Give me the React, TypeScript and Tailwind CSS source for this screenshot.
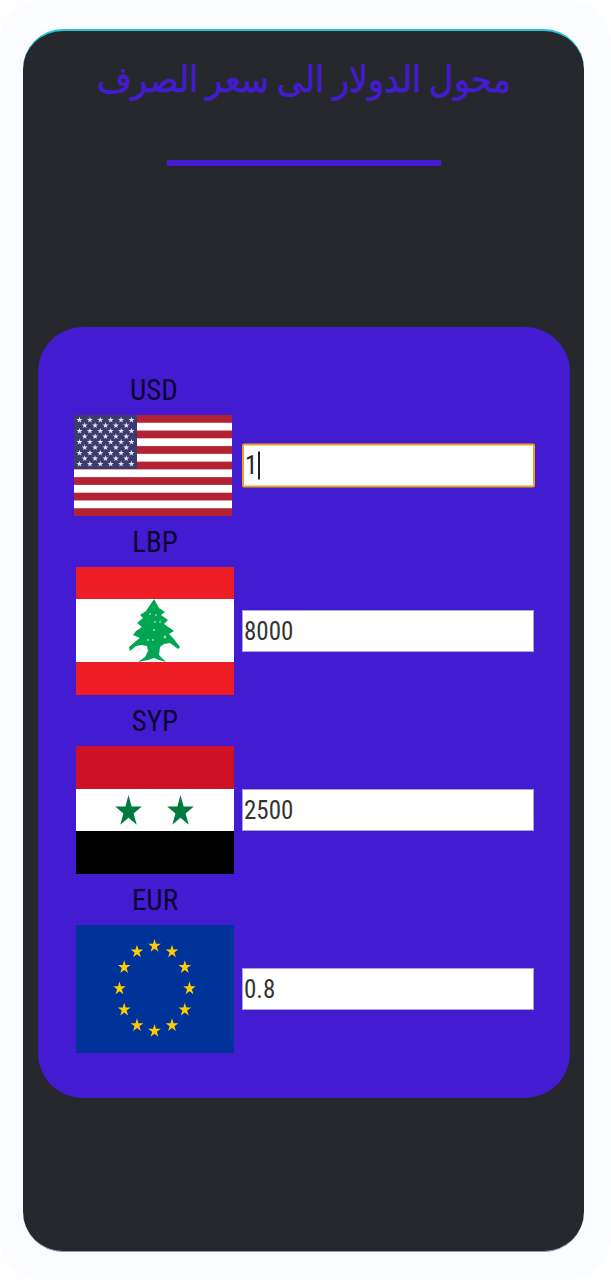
import type { ReactNode } from 'react'

const starPoints = (cx: number, cy: number, rx: number, ry: number) => {
  const pts: string[] = []
  for (let i = 0; i < 10; i++) {
    const a = (Math.PI / 5) * i - Math.PI / 2
    const k = i % 2 === 0 ? 1 : 0.382
    pts.push(`${(cx + Math.cos(a) * rx * k).toFixed(2)},${(cy + Math.sin(a) * ry * k).toFixed(2)}`)
  }
  return pts.join(' ')
}

const UsFlag = () => {
  const stripe = 101 / 13
  const stars: ReactNode[] = []
  for (let row = 0; row < 9; row++) {
    const count = row % 2 === 0 ? 6 : 5
    for (let col = 0; col < count; col++) {
      const x = (row % 2 === 0 ? 5.5 : 10.7) + col * 10.4
      const y = 5 + row * 5.5
      stars.push(<polygon key={`${row}-${col}`} points={starPoints(x, y, 3.2, 3.2)} fill='#e4e5ee' />)
    }
  }
  return (
    <svg viewBox='0 0 158 101' className='block w-[158px] h-[101px]'>
      <rect width='158' height='101' fill='#fff' />
      {Array.from({ length: 7 }, (_, i) => (
        <rect key={i} y={i * 2 * stripe} width='158' height={stripe} fill='#b22234' />
      ))}
      <rect width='63' height='54' fill='#3c3b6e' />
      {stars}
    </svg>
  )
}

const LbFlag = () => (
  <svg viewBox='0 0 158 128' className='block w-[158px] h-[128px]'>
    <rect width='158' height='128' fill='#ee1c25' />
    <rect y='32' width='158' height='63' fill='#fff' />
    <path
      fill='#00a651'
      d='M78 32 L83 41 L89 45 L85 48 L92 53 L88 57 L98 64 L93 67 L97 71 L104 80 L102 82 L94 76 L88 77 L84 80 L83 88 L90 95 L83 93 L78 91 L72 93 L62 95 L69 90 L72 84 L71 79 L65 78 L60 79 L54 84 L53 80 L60 74 L64 71 L57 68 L60 64 L66 60 L61 56 L67 51 L64 48 L70 44 Z'
    />
    <g fill='#fff' opacity='0.6'>
      <circle cx='74' cy='47' r='0.9' />
      <circle cx='80' cy='48' r='0.9' />
      <circle cx='79' cy='55' r='1' />
      <circle cx='84' cy='55' r='0.9' />
      <circle cx='78' cy='63' r='1.1' />
      <circle cx='72' cy='73' r='1' />
      <circle cx='77' cy='73' r='1' />
      <circle cx='89' cy='70' r='1.4' />
    </g>
  </svg>
)

const SyFlag = () => (
  <svg viewBox='0 0 158 128' className='block w-[158px] h-[128px]'>
    <rect width='158' height='43' fill='#ce1126' />
    <rect y='43' width='158' height='42' fill='#fff' />
    <rect y='85' width='158' height='43' fill='#000' />
    <polygon points={starPoints(52.5, 65.5, 14, 16.5)} fill='#007a3d' />
    <polygon points={starPoints(104.5, 65.5, 14, 16.5)} fill='#007a3d' />
  </svg>
)

const EuFlag = () => (
  <svg viewBox='0 0 158 128' className='block w-[158px] h-[128px]'>
    <rect width='158' height='128' fill='#003399' />
    {Array.from({ length: 12 }, (_, i) => {
      const a = (Math.PI / 6) * i
      return (
        <polygon
          key={i}
          points={starPoints(78.5 + Math.sin(a) * 35, 63.5 - Math.cos(a) * 42.5, 6.6, 7)}
          fill='#ffcc00'
        />
      )
    })}
  </svg>
)

const rows = [
  { code: 'LBP', value: '8000', flag: <LbFlag /> },
  { code: 'SYP', value: '2500', flag: <SyFlag /> },
  { code: 'EUR', value: '0.8', flag: <EuFlag /> },
]

const labelClass = 'w-[158px] h-[28px] text-center text-[29px] leading-[28px] text-[#0a0530] [font-stretch:85%]'

const App = () => {
  return (
    <div className='w-[611px] h-[1280px] bg-white font-[Roboto,sans-serif]'>
      <div className='h-full rounded-[40px] bg-[#fbfcff] pl-[23px] pt-[29px]'>
        <div className='h-[1223px] w-[561px] rounded-[40px] border-t-2 border-b border-t-[#25c4d4] border-b-[#8f99bd] bg-[#27282d] px-[15px] overflow-hidden'>
          <h1
            dir='rtl'
            className='h-[100px] pt-[24px] text-center text-[36px] leading-[50px] font-normal text-[#431cd1] scale-x-[0.93] [-webkit-text-stroke:0.6px_#431cd1]'
          >
            محول الدولار الى سعر الصرف
          </h1>
          <div className='mx-auto mt-[29px] h-[6px] w-[274px] bg-[#431cd1]' />
          <div className='mt-[161px] h-[771px] w-[532px] rounded-[45px] bg-[#431cd1] pl-[38px] pt-[49px]'>
            <div className={`${labelClass} -ml-[1px]`}>USD</div>
            <div className='mt-[11px] -ml-[2px] flex items-center'>
              <UsFlag />
              <div className='ml-[10px] flex h-[44px] w-[293px] -translate-y-[0.5px] items-center rounded-[2px] border-2 border-[#f0a020] bg-white pl-[1px] text-[25px] text-[#222] [font-stretch:85%]'>
                1<span className='ml-[1px] h-[28px] w-[2px] bg-[#222]' />
              </div>
            </div>
            {rows.map((row) => (
              <div key={row.code} className='mt-[12px]'>
                <div className={labelClass}>{row.code}</div>
                <div className='mt-[11px] flex items-center'>
                  {row.flag}
                  <input
                    readOnly
                    value={row.value}
                    className='ml-[8px] h-[42px] w-[292px] border border-[#a9a3d8] bg-white pl-[1px] text-[25px] text-[#333] outline-none [font-stretch:85%]'
                  />
                </div>
              </div>
            ))}
          </div>
        </div>
      </div>
    </div>
  )
}

export default App
